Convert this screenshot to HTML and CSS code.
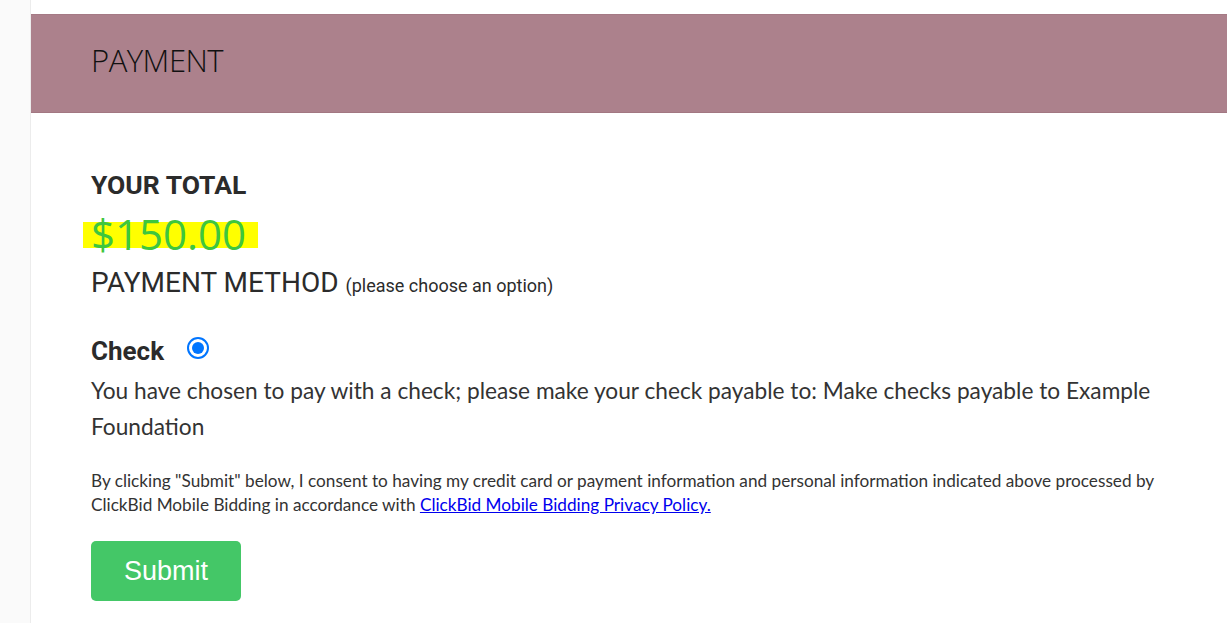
FILE: index.html
```html
<!DOCTYPE html>
<html>
<head>
<meta charset="utf-8">
<link rel="stylesheet" href="styles.css">
</head>
<body>
<div class="page">
  <aside class="rail"></aside>
  <main class="main">
    <header class="band"><h1 class="band-title">PAYMENT</h1></header>
    <section class="content">
      <h2 class="total-label">YOUR TOTAL</h2>
      <div class="total-amount"><span class="hl">$150.00</span></div>
      <div class="method">PAYMENT METHOD <span class="method-note">(please choose an option)</span></div>
      <div class="option">
        <span class="option-name">Check</span>
        <span class="radio"></span>
      </div>
      <p class="check-text">You have chosen to pay with a check; please make your check payable to: Make checks payable to Example Foundation</p>
      <p class="consent">By clicking "Submit" below, I consent to having my credit card or payment information and personal information indicated above processed by ClickBid Mobile Bidding in accordance with <a class="link" href="#">ClickBid Mobile Bidding Privacy Policy.</a></p>
      <button class="submit">Submit</button>
    </section>
  </main>
</div>
</body>
</html>
```
FILE: styles.css
```css
html, body { margin: 0; padding: 0; background: #fff; }
body { font-family: Roboto, "Liberation Sans", sans-serif; color: #333; overflow: hidden; }
.page { display: flex; min-height: 623px; }
.rail { width: 30px; flex: none; background: #fafafa; border-right: 1px solid #ececec; }
.main { flex: 1; padding-top: 14px; }
.band {
  height: 97px;
  background: #ac818c;
  border-top: 1px solid #a57a85;
  border-bottom: 1px solid #a27782;
  display: flex; align-items: center;
  padding-left: 60px;
}
.band-title {
  margin: 0 0 7px 0; font-family: "Open Sans", sans-serif; font-weight: 300;
  font-size: 31px; color: #111; letter-spacing: -0.5px;
}
.content { padding: 58px 60px 0 60px; }
.total-label { margin: 0; font-family: Roboto, sans-serif; font-weight: 700; font-size: 26.5px; line-height: 28px; color: #2b2b2b; }
.total-amount { margin-top: 11px; height: 57px; }
.hl {
  font-family: "Open Sans", sans-serif; font-size: 42px; line-height: 48px; color: #3ec63e;
  background: linear-gradient(#ffff00, #ffff00) no-repeat;
  background-size: 100% 26px; background-position: 0 17px;
  padding: 0 12px 0 8px; margin-left: -8px;
}
.method { font-family: Roboto, sans-serif; font-size: 28px; line-height: 32px; color: #2b2b2b; }
.method-note { font-size: 18px; }
.option { display: flex; align-items: center; gap: 23px; margin-top: 32px; height: 34px; }
.option-name { font-family: Roboto, sans-serif; font-weight: 700; font-size: 26px; color: #2b2b2b; }
.radio {
  width: 22px; height: 22px; border-radius: 50%; box-sizing: border-box;
  border: 2px solid #0075ff; display: flex; align-items: center; justify-content: center;
  margin-top: -6px;
}
.radio::after { content: ""; width: 12px; height: 12px; border-radius: 50%; background: #0075ff; }
.check-text { margin: 5px 0 0 0; font-family: Lato, sans-serif; font-size: 22.7px; line-height: 36px; color: #333; }
.consent { margin: 24px 0 0 0; font-family: Lato, sans-serif; font-size: 17.2px; line-height: 24px; color: #333; }
.link { color: #0000ee; text-decoration: underline; }
.submit {
  margin-top: 24px; width: 150px; height: 60px; border: none; border-radius: 5px;
  background: #44c767; color: #fff; font-family: "Liberation Sans", Arial, sans-serif; font-size: 27px;
}
```
